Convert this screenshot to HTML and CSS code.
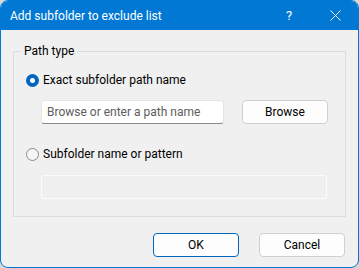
FILE: index.html
```html
<!DOCTYPE html>
<html lang="en">
<head>
    <meta charset="UTF-8">
    <meta name="viewport" content="width=device-width, initial-scale=1.0">
    <title>Add subfolder to exclude list</title>
    <link rel="stylesheet" href="styles.css">
</head>
<body>
    <div class="window">
        <div class="titlebar">
            <span class="title">Add subfolder to exclude list</span>
            <span class="caption-btn help">?</span>
            <span class="caption-btn close">
                <svg width="11" height="11" viewBox="0 0 11 11">
                    <path d="M0.5 0.5 L10.5 10.5 M10.5 0.5 L0.5 10.5" stroke="#fff" stroke-width="1"/>
                </svg>
            </span>
        </div>

        <div class="content">
            <fieldset class="group">
                <legend>Path type</legend>

                <label class="radio-row first">
                    <input type="radio" name="ptype" checked>
                    <span>Exact subfolder path name</span>
                </label>
                <div class="field-row">
                    <input type="text" class="text-input" placeholder="Browse or enter a path name">
                    <button class="btn browse">Browse</button>
                </div>

                <label class="radio-row second">
                    <input type="radio" name="ptype">
                    <span>Subfolder name or pattern</span>
                </label>
                <div class="field-row">
                    <input type="text" class="text-input wide" disabled>
                </div>
            </fieldset>

            <div class="actions">
                <button class="btn default">OK</button>
                <button class="btn">Cancel</button>
            </div>
        </div>
    </div>
</body>
</html>
```

FILE: styles.css
```css
* {
    box-sizing: border-box;
}
body {
    margin: 0;
    font-family: Roboto, "Noto Sans", Arial, sans-serif;
    font-size: 12px;
    background-color: #d8d8d8;
}
.window {
    width: 359px;
    height: 268px;
    background-color: #f0f0f0;
    border: 1px solid #0078d4;
    border-radius: 8px;
    overflow: hidden;
}
.titlebar {
    height: 29px;
    display: flex;
    align-items: center;
    background-color: #0078d4;
    color: white;
}
.title {
    flex: 1;
    padding-left: 9px;
}
.caption-btn {
    width: 46px;
    height: 29px;
    display: flex;
    align-items: center;
    justify-content: center;
}
.help {
    font-size: 13px;
}
.content {
    padding: 13px 12px 0 12px;
}
.group {
    margin: 0;
    padding: 0 12px 17px 12px;
    border: 1px solid #dcdcdc;
}
.group legend {
    margin-left: -5px;
    padding: 0 3px;
    line-height: 16px;
    color: #000;
}
.radio-row {
    display: flex;
    align-items: center;
    gap: 4px;
    height: 16px;
    color: #000;
}
.radio-row.first {
    margin-top: 13px;
}
.radio-row.second {
    margin-top: 22px;
}
.radio-row input {
    appearance: none;
    width: 13px;
    height: 13px;
    margin: 0;
    border-radius: 50%;
    border: 1px solid #8a8a8a;
    background-color: #f5f5f5;
}
.radio-row input:checked {
    border: 4px solid #0067c0;
    background-color: white;
}
.field-row {
    display: flex;
    gap: 18px;
    margin-top: 12px;
    padding-left: 15px;
}
.radio-row.second + .field-row {
    margin-top: 13px;
}
.text-input {
    width: 183px;
    height: 24px;
    padding: 0 5px;
    font: inherit;
    background-color: white;
    border: 1px solid #e5e5e5;
    border-bottom-color: #8a8a8a;
    border-radius: 3px;
}
.text-input::placeholder {
    color: #5d5d5d;
}
.text-input.wide {
    width: 286px;
    height: 24px;
    background-color: #f0f0f0;
    border: 1px solid #fbfbfb;
    border-radius: 2px;
}
.btn {
    width: 86px;
    height: 24px;
    font: inherit;
    color: #000;
    background-color: #fdfdfd;
    border: 1px solid #d0d0d0;
    border-radius: 4px;
}
.actions {
    display: flex;
    justify-content: flex-end;
    gap: 20px;
    margin-top: 16px;
    padding-right: 1px;
}
.btn.default {
    border-color: #0067c0;
}
```
